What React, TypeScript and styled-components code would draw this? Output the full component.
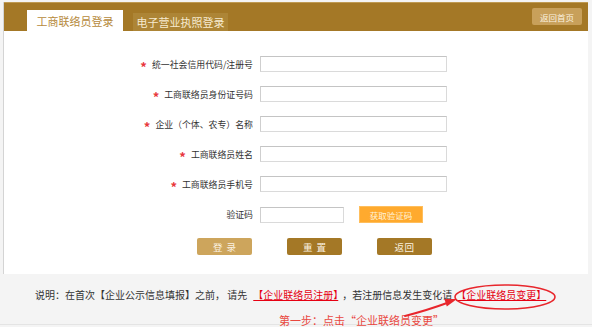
import React from "react";
import styled, { createGlobalStyle } from "styled-components";

const Global = createGlobalStyle`
  html, body { margin: 0; padding: 0; background: #f4f4f4; }
  body { font-family: "Noto Sans CJK SC", "Noto Sans", sans-serif; color: #333; }
  * { box-sizing: border-box; }
`;

const Page = styled.div`
  width: 592px;
  height: 327px;
  display: flex;
  flex-direction: column;
  padding-top: 2px;
  overflow: hidden;
`;

const Panel = styled.div`
  margin: 0 4px 0 3px;
  background: #fff;
  border-left: 1px solid #d4d4d4;
`;

const Header = styled.div`
  height: 29px;
  background: #a47826;
  border-top: 1px solid #bf9a52;
  display: flex;
  align-items: flex-end;
  padding: 0 6px 0 23px;
`;

const Tab = styled.div<{ $active?: boolean }>`
  width: ${(p) => (p.$active ? 96 : 95)}px;
  height: ${(p) => (p.$active ? 21 : 18)}px;
  margin-left: ${(p) => (p.$active ? 0 : 10)}px;
  background: ${(p) => (p.$active ? "#fff" : "#ad8536")};
  color: ${(p) => (p.$active ? "#b68a3c" : "#f6ead0")};
  font-size: 11px;
  display: flex;
  align-items: center;
  justify-content: center;
  padding-top: ${(p) => (p.$active ? 1 : 0)}px;
`;

const HomeButton = styled.div`
  margin-left: auto;
  align-self: flex-start;
  margin-top: 5px;
  width: 50px;
  height: 17px;
  background: #c8a05a;
  border-radius: 2px;
  color: #fbf2e0;
  font-size: 8.5px;
  display: flex;
  align-items: center;
  justify-content: center;
`;

const Form = styled.div`
  padding: 25px 0 19px 0;
  display: grid;
  grid-template-columns: 249px auto;
  column-gap: 7px;
  row-gap: 14px;
  align-items: center;
`;

const Label = styled.div`
  display: flex;
  justify-content: flex-end;
  align-items: center;
  font-size: 8.9px;
  color: #333;
  height: 16px;
`;

const Star = styled.span`
  color: #e8383d;
  font-size: 13px;
  font-weight: bold;
  margin-right: 5px;
  line-height: 1;
  position: relative;
  top: 2px;
`;

const Input = styled.div<{ $w?: number }>`
  width: ${(p) => p.$w ?? 187}px;
  height: 16px;
  border: 1px solid #dadada;
  border-top-color: #c4c4c4;
  border-left-color: #cfcfcf;
  background: #fff;
`;

const CaptchaCell = styled.div`
  display: flex;
  align-items: center;
  gap: 15px;
`;

const CodeButton = styled.div`
  width: 64px;
  height: 17px;
  background: #ffaa2e;
  color: #fff3dc;
  font-size: 8.5px;
  display: flex;
  align-items: center;
  justify-content: center;
  border: 1px solid #ffbe5c;
`;

const ButtonRow = styled.div`
  grid-column: 1 / span 2;
  display: flex;
  gap: 35px;
  padding-left: 193px;
  margin-top: 1px;
`;

const ActionButton = styled.div<{ $light?: boolean; $spaced?: boolean }>`
  width: 55px;
  height: 17px;
  border-radius: 2px;
  background: ${(p) => (p.$light ? "#cda55c" : "#a47826")};
  color: #fbf2e2;
  font-size: 9.5px;
  letter-spacing: ${(p) => (p.$spaced ? "4px" : "0.5px")};
  padding-left: ${(p) => (p.$spaced ? "4px" : "0")};
  display: flex;
  align-items: center;
  justify-content: center;
`;

const Footer = styled.div`
  position: relative;
  height: 51px;
  border-bottom: 1px solid #e4e4e4;
  padding: 14px 0 0 35px;
`;

const Note = styled.div`
  font-size: 10px;
  line-height: 14px;
  color: #333;
  white-space: nowrap;
`;

const Link = styled.span<{ $l: number; $r: number }>`
  color: #e60012;
  text-decoration: underline;
  margin-left: ${(p) => p.$l}px;
  margin-right: ${(p) => p.$r}px;
`;

const Hint = styled.div`
  margin-top: 11px;
  padding-left: 244px;
  font-size: 11px;
  line-height: 14px;
  color: #e9473f;
  white-space: nowrap;
`;

const Overlay = styled.svg`
  position: absolute;
  left: 0;
  top: 0;
  width: 592px;
  height: 51px;
  pointer-events: none;
`;

const fields = [
  "统一社会信用代码/注册号",
  "工商联络员身份证号码",
  "企业（个体、农专）名称",
  "工商联络员姓名",
  "工商联络员手机号",
];

export default function App() {
  return (
    <>
      <Global />
      <Page>
        <Panel>
          <Header>
            <Tab $active>工商联络员登录</Tab>
            <Tab>电子营业执照登录</Tab>
            <HomeButton>返回首页</HomeButton>
          </Header>
          <Form>
            {fields.map((f) => (
              <React.Fragment key={f}>
                <Label>
                  <Star>*</Star>
                  {f}
                </Label>
                <Input />
              </React.Fragment>
            ))}
            <Label>验证码</Label>
            <CaptchaCell>
              <Input $w={84} />
              <CodeButton>获取验证码</CodeButton>
            </CaptchaCell>
            <ButtonRow>
              <ActionButton $light $spaced>登录</ActionButton>
              <ActionButton $spaced>重置</ActionButton>
              <ActionButton>返回</ActionButton>
            </ButtonRow>
          </Form>
        </Panel>
        <Footer>
          <Note>
            说明：在首次【企业公示信息填报】之前， 请先
            <Link $l={6} $r={4}>【企业联络员注册】</Link>
            ，若注册信息发生变化请
            <Link $l={4} $r={0}>【企业联络员变更】</Link>
          </Note>
          <Hint>第一步：点击“企业联络员变更”</Hint>
          <Overlay viewBox="0 0 592 51">
            <ellipse cx="505" cy="23" rx="50" ry="12" fill="none" stroke="#e8262c" strokeWidth="1.5" />
            <path d="M405 42 Q428 36 447 29" fill="none" stroke="#e8262c" strokeWidth="2" strokeLinecap="round" />
            <polygon points="457,25 446.8,32.5 444.4,24.9" fill="#e8262c" />
          </Overlay>
        </Footer>
      </Page>
    </>
  );
}
